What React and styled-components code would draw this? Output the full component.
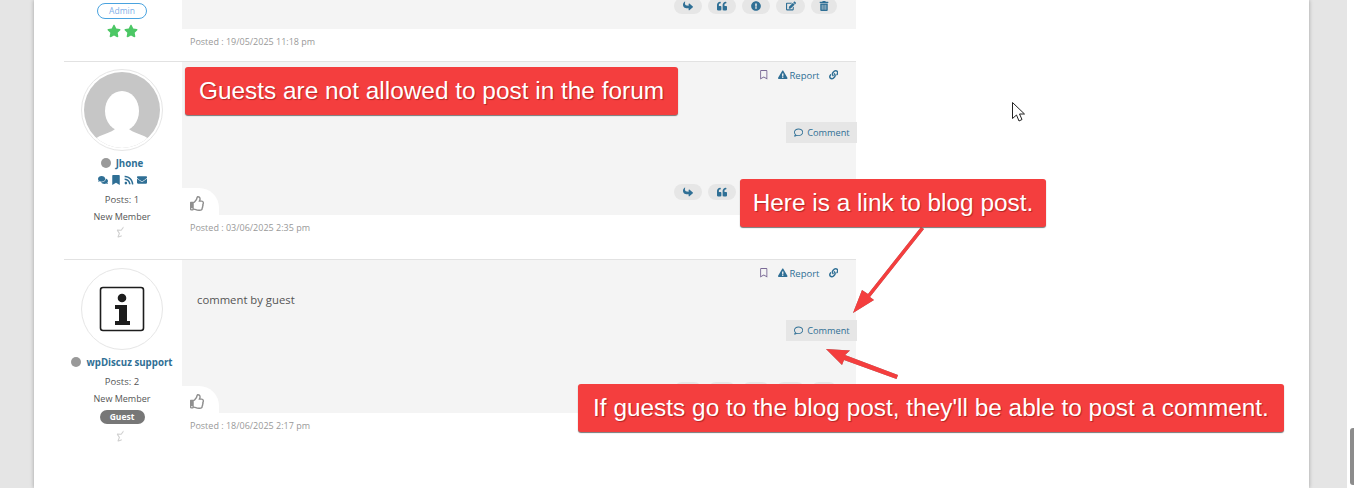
import React from "react";
import styled, { createGlobalStyle } from "styled-components";
import {
  FaBookmark,
  FaComments,
  FaEdit,
  FaEnvelope,
  FaExclamationCircle,
  FaExclamationTriangle,
  FaLink,
  FaQuoteLeft,
  FaRegBookmark,
  FaRegComment,
  FaRegStarHalf,
  FaRegThumbsUp,
  FaReply,
  FaRss,
  FaStar,
  FaTrashAlt,
} from "react-icons/fa";

const GlobalStyle = createGlobalStyle`
  html, body {
    margin: 0;
    height: 488px;
    overflow: hidden;
    background: #e5e5e5;
    font-family: "Open Sans", sans-serif;
  }
`;

const Screen = styled.div`
  position: relative;
  display: flex;
  width: 1354px;
  height: 488px;
  overflow: hidden;
  padding-left: 34px;
  box-sizing: border-box;
`;

const Sheet = styled.main`
  width: 1275px;
  height: 488px;
  background: #fff;
  box-shadow: 0 0 4px rgba(0, 0, 0, 0.3);
  padding-left: 30px;
  box-sizing: border-box;
`;

const Track = styled.div`
  width: 7px;
  height: 488px;
  margin-left: 38px;
  background: #fff;
  padding: 428px 0 0 3px;
  box-sizing: border-box;
`;

const Thumb = styled.div`
  width: 4px;
  height: 57px;
  background: #8c8c8c;
  border-radius: 3px 0 0 3px;
`;

const Thread = styled.div`
  width: 792px;
`;

const Post = styled.article`
  display: flex;
  height: ${(p) => p.$height}px;
  overflow: ${(p) => (p.$clipped ? "hidden" : "visible")};
  align-items: flex-start;
  box-sizing: border-box;
  & + & {
    border-top: 1px solid #e2e2e2;
  }
`;

const Side = styled.div`
  width: 116px;
  margin-right: 2px;
  flex: none;
  align-self: ${(p) => (p.$clipped ? "flex-end" : "flex-start")};
  display: flex;
  flex-direction: column;
  align-items: center;
  padding-top: ${(p) => p.$top || 0}px;
  padding-bottom: ${(p) => (p.$clipped ? 23 : 0)}px;
  color: #555;
`;

const Avatar = styled.div`
  width: 82px;
  height: 82px;
  border-radius: 50%;
  border: 1px solid #e6e6e6;
  box-sizing: border-box;
  padding: 2px;
  display: flex;
  align-items: center;
  justify-content: center;
  overflow: hidden;
  svg {
    display: block;
  }
`;

const NameRow = styled.div`
  display: flex;
  align-items: center;
  gap: 5px;
  margin-top: 5px;
  height: 14px;
  font-size: 9.7px;
  font-weight: 700;
  color: #2f6f95;
  white-space: nowrap;
`;

const Dot = styled.span`
  width: 10px;
  height: 10px;
  border-radius: 50%;
  background: #999;
`;

const UserIcons = styled.div`
  display: flex;
  align-items: center;
  gap: 3px;
  height: 12px;
  margin-top: 4px;
  font-size: 10px;
  color: #2f6f95;
`;

const Info = styled.div`
  font-size: 9.5px;
  line-height: 14px;
  margin-top: ${(p) => p.$top}px;
  color: #555;
`;

const Rank = styled(Info)`
  font-size: 9px;
`;

const Badge = styled.span`
  display: block;
  text-align: center;
  box-sizing: border-box;
  font-size: 8.5px;
`;

const AdminBadge = styled(Badge)`
  width: 50px;
  height: 16px;
  line-height: 14px;
  border: 1px solid #4aa3df;
  border-radius: 8px;
  color: #7fb0e8;
`;

const GuestBadge = styled(Badge)`
  width: 45px;
  height: 14px;
  line-height: 14px;
  margin-top: 4px;
  border-radius: 7px;
  background: #777;
  color: #fff;
  font-weight: 700;
`;

const Stars = styled.div`
  display: flex;
  gap: 3px;
  margin-top: 5px;
  font-size: 14px;
  color: #4cc765;
`;

const EmptyStar = styled(FaRegStarHalf)`
  display: block;
  margin-top: ${(p) => p.$top}px;
  font-size: 13px;
  color: #d0d0d0;
  transform: rotate(12deg);
`;

const Body = styled.div`
  flex: 1;
  min-width: 0;
`;

const Panel = styled.div`
  height: ${(p) => p.$height}px;
  background: #f4f4f4;
  display: flex;
  flex-direction: column;
`;

const TopTools = styled.div`
  display: flex;
  justify-content: flex-end;
  align-items: center;
  gap: 9px;
  height: 14px;
  margin-top: 6px;
  padding-right: 18px;
  font-size: 9.5px;
  color: #2f6f95;
`;

const ReportLink = styled.span`
  display: flex;
  align-items: center;
  gap: 2px;
  margin-left: 1px;
`;

const Bookmark = styled(FaRegBookmark)`
  color: #7a6a96;
`;

const Content = styled.div`
  height: 40px;
  padding: 12px 0 0 15px;
  box-sizing: border-box;
  font-size: 11.3px;
  line-height: 16px;
  color: #555;
`;

const CommentRow = styled.div`
  display: flex;
  justify-content: flex-end;
  margin-right: -1px;
  height: 21px;
  flex: none;
`;

const CommentButton = styled.span`
  display: flex;
  align-items: center;
  gap: 4px;
  width: 71px;
  box-sizing: border-box;
  padding-left: 8px;
  background: #e6e6e6;
  font-size: 9.2px;
  color: #2f6f95;
`;

const Actions = styled.div`
  display: flex;
  align-items: flex-start;
  margin-top: auto;
  height: 27px;
  flex: none;
`;

const LikeTab = styled.div`
  width: 37px;
  height: 27px;
  padding: 7px 0 0 8px;
  box-sizing: border-box;
  background: #fff;
  border-top-right-radius: 20px;
  font-size: 15px;
  color: #8f8f8f;
`;

const Pills = styled.div`
  display: flex;
  gap: 6px;
  margin-left: auto;
  margin-right: 19px;
  margin-top: -4px;
`;

const Pill = styled.span`
  display: flex;
  align-items: center;
  justify-content: center;
  width: ${(p) => p.$width}px;
  height: 16px;
  border-radius: 8px;
  background: #e6e6e6;
  font-size: 10px;
  color: #2f6f95;
`;

const FlippedReply = styled(FaReply)`
  transform: rotate(180deg);
`;

const Posted = styled.div`
  height: 26px;
  padding-left: 8px;
  font-size: 9px;
  line-height: 26px;
  color: #999;
`;

const Callout = styled.div`
  position: absolute;
  left: ${(p) => p.$left}px;
  top: ${(p) => p.$top}px;
  width: ${(p) => p.$width}px;
  height: 48px;
  box-sizing: border-box;
  background: #f43e3e;
  border-radius: 3px;
  box-shadow: 0 1px 1px #777;
  color: #fff;
  font-family: "Liberation Sans", Arial, sans-serif;
  font-size: 24.4px;
  line-height: 47px;
  text-align: center;
  white-space: nowrap;
  text-shadow: 1px 1px 1px rgba(80, 0, 0, 0.4);
`;

const Overlay = styled.svg`
  position: absolute;
  left: 0;
  top: 0;
  pointer-events: none;
`;

const ArrowShape = styled.path`
  fill: #f43e3e;
  filter: drop-shadow(0.5px 0.5px 0.5px rgba(0, 0, 0, 0.45));
`;

function GuestAvatar() {
  return (
    <svg width="76" height="76" viewBox="0 0 76 76">
      <defs>
        <clipPath id="avatarClip">
          <circle cx="38" cy="38" r="38" />
        </clipPath>
      </defs>
      <g clipPath="url(#avatarClip)">
        <rect width="76" height="76" fill="#c6c6c6" />
        <ellipse cx="38" cy="39" rx="17" ry="20" fill="#fff" />
        <path d="M10 68 C16 62 28 61 32 56 L44 56 C48 61 60 62 66 68 L66 78 L10 78 Z" fill="#fff" />
      </g>
    </svg>
  );
}

function InfoLogo() {
  return (
    <svg width="46" height="46" viewBox="0 0 46 46">
      <rect x="1.5" y="1.5" width="43" height="43" rx="2.5" fill="#fff" stroke="#1d1d1d" strokeWidth="1.6" />
      <circle cx="23" cy="12" r="4.3" fill="#1d1d1d" />
      <path d="M16 19 H28 V35 H31 V39 H16 V35 H20 V23 H16 Z" fill="#1d1d1d" />
    </svg>
  );
}

function ActionPills() {
  return (
    <Pills>
      <Pill $width={28}><FlippedReply /></Pill>
      <Pill $width={28}><FaQuoteLeft /></Pill>
      <Pill $width={28}><FaExclamationCircle /></Pill>
      <Pill $width={29}><FaEdit /></Pill>
      <Pill $width={26}><FaTrashAlt /></Pill>
    </Pills>
  );
}

function PostPanel({ text }) {
  return (
    <Panel $height={153}>
      <TopTools>
        <Bookmark />
        <ReportLink><FaExclamationTriangle /> Report</ReportLink>
        <FaLink />
      </TopTools>
      <Content>{text}</Content>
      <CommentRow>
        <CommentButton><FaRegComment /> Comment</CommentButton>
      </CommentRow>
      <Actions>
        <LikeTab><FaRegThumbsUp /></LikeTab>
        <ActionPills />
      </Actions>
    </Panel>
  );
}

export default function App() {
  return (
    <Screen>
      <GlobalStyle />
      <Sheet>
        <Thread>
          <Post $height={61} $clipped>
            <Side $clipped>
              <AdminBadge>Admin</AdminBadge>
              <Stars><FaStar /><FaStar /></Stars>
            </Side>
            <Body>
              <Panel $height={29}>
                <Actions>
                  <ActionPills />
                </Actions>
              </Panel>
              <Posted>Posted : 19/05/2025 11:18 pm</Posted>
            </Body>
          </Post>
          <Post $height={198}>
            <Side $top={7}>
              <Avatar><GuestAvatar /></Avatar>
              <NameRow><Dot /> Jhone</NameRow>
              <UserIcons>
                <FaComments />
                <FaBookmark />
                <FaRss />
                <FaEnvelope />
              </UserIcons>
              <Info $top={7}>Posts: 1</Info>
              <Rank $top={3}>New Member</Rank>
              <EmptyStar $top={2} />
            </Side>
            <Body>
              <PostPanel />
              <Posted>Posted : 03/06/2025 2:35 pm</Posted>
            </Body>
          </Post>
          <Post $height={198}>
            <Side $top={8}>
              <Avatar><InfoLogo /></Avatar>
              <NameRow><Dot /> wpDiscuz support</NameRow>
              <Info $top={6}>Posts: 2</Info>
              <Rank $top={3}>New Member</Rank>
              <GuestBadge>Guest</GuestBadge>
              <EmptyStar $top={6} />
            </Side>
            <Body>
              <PostPanel text="comment by guest" />
              <Posted>Posted : 18/06/2025 2:17 pm</Posted>
            </Body>
          </Post>
        </Thread>
      </Sheet>
      <Track><Thumb /></Track>

      <Callout $left={185} $top={67} $width={493}>Guests are not allowed to post in the forum</Callout>
      <Callout $left={740} $top={179} $width={306}>Here is a link to blog post.</Callout>
      <Callout $left={578} $top={384} $width={706}>If guests go to the blog post, they'll be able to post a comment.</Callout>

      <Overlay width="1354" height="488" viewBox="0 0 1354 488">
        <ArrowShape d="M921 227 L868 294 L862 290 L853 313 L874 300 L870 297 L924 229 Z" />
        <ArrowShape d="M898 375 L845 355 L850 350.5 L826 349 L842 365 L844 360 L896.5 379 Z" />
        <path d="M1012.5 102.5 L1012.5 118.5 L1016.5 115 L1019 121 L1022 119.5 L1019.5 114 L1024.5 114 Z" fill="#fff" stroke="#222" strokeWidth="1" />
      </Overlay>
    </Screen>
  );
}
